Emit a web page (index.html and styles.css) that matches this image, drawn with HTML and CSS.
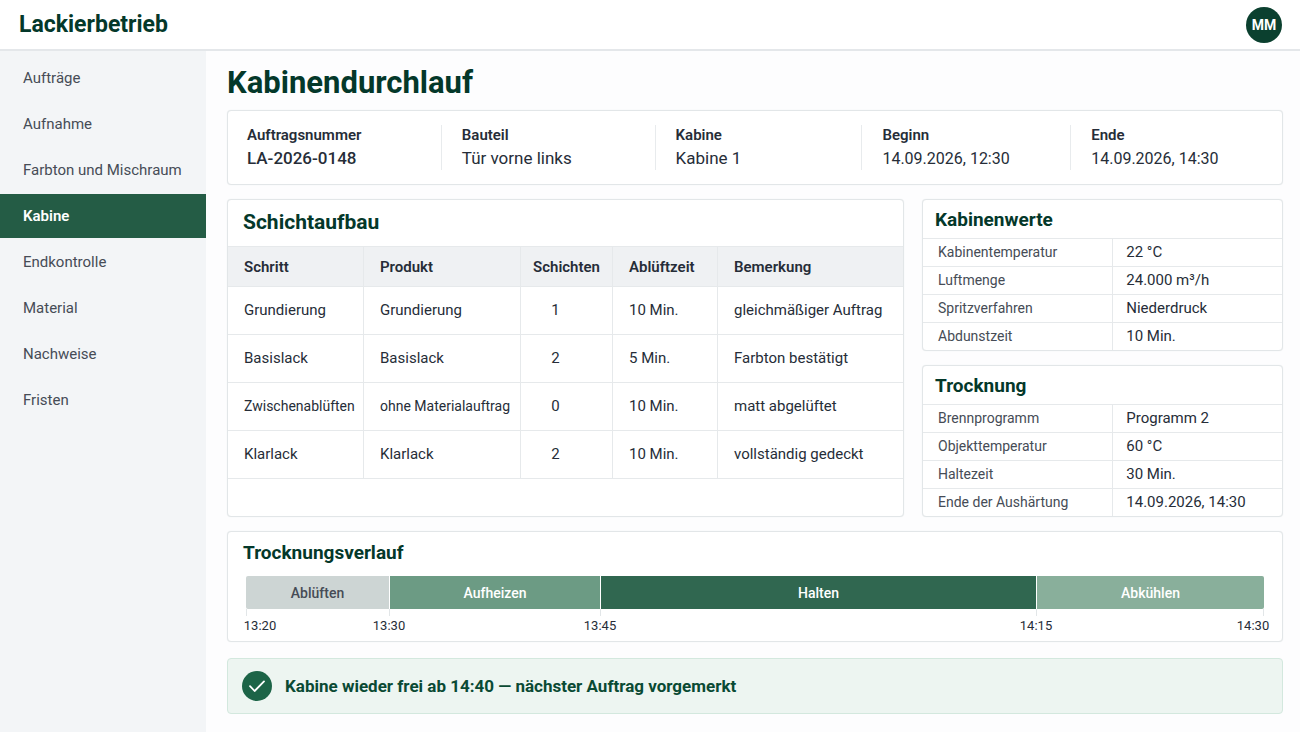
FILE: index.html
```html
<!DOCTYPE html>
<html lang="de">
<head>
  <meta charset="UTF-8" />
  <meta name="viewport" content="width=device-width, initial-scale=1.0" />
  <title>Kabinendurchlauf</title>
  <link rel="stylesheet" href="styles.css">
</head>
<body>

  <header class="topbar">
    <a href="#" class="brand">Lackierbetrieb</a>
    <button type="button" class="avatar">MM</button>
  </header>

  <div class="layout">
    <nav class="sidebar">
      <a href="#" class="nav-link">Aufträge</a>
      <a href="#" class="nav-link">Aufnahme</a>
      <a href="#" class="nav-link">Farbton und Mischraum</a>
      <a href="#" class="nav-link active">Kabine</a>
      <a href="#" class="nav-link">Endkontrolle</a>
      <a href="#" class="nav-link">Material</a>
      <a href="#" class="nav-link">Nachweise</a>
      <a href="#" class="nav-link">Fristen</a>
    </nav>

    <main class="content">
      <h1>Kabinendurchlauf</h1>

      <dl class="card summary">
        <div class="summary-item">
          <dt>Auftragsnummer</dt>
          <dd class="order-number">LA-2026-0148</dd>
        </div>
        <div class="summary-item">
          <dt>Bauteil</dt>
          <dd>Tür vorne links</dd>
        </div>
        <div class="summary-item">
          <dt>Kabine</dt>
          <dd>Kabine 1</dd>
        </div>
        <div class="summary-item">
          <dt>Beginn</dt>
          <dd class="date">14.09.2026, 12:30</dd>
        </div>
        <div class="summary-item">
          <dt>Ende</dt>
          <dd class="date">14.09.2026, 14:30</dd>
        </div>
      </dl>

      <div class="columns">
        <section class="card layers">
          <h2>Schichtaufbau</h2>
          <table class="layer-table">
            <colgroup>
              <col class="col-step" />
              <col class="col-product" />
              <col class="col-count" />
              <col class="col-time" />
              <col />
            </colgroup>
            <thead>
              <tr>
                <th>Schritt</th>
                <th>Produkt</th>
                <th class="count">Schichten</th>
                <th>Ablüftzeit</th>
                <th>Bemerkung</th>
              </tr>
            </thead>
            <tbody>
              <tr>
                <td>Grundierung</td>
                <td>Grundierung</td>
                <td class="count">1</td>
                <td>10 Min.</td>
                <td>gleichmäßiger Auftrag</td>
              </tr>
              <tr>
                <td>Basislack</td>
                <td>Basislack</td>
                <td class="count">2</td>
                <td>5 Min.</td>
                <td>Farbton bestätigt</td>
              </tr>
              <tr>
                <td class="long">Zwischenablüften</td>
                <td class="long">ohne Materialauftrag</td>
                <td class="count">0</td>
                <td>10 Min.</td>
                <td>matt abgelüftet</td>
              </tr>
              <tr>
                <td>Klarlack</td>
                <td>Klarlack</td>
                <td class="count">2</td>
                <td>10 Min.</td>
                <td>vollständig gedeckt</td>
              </tr>
            </tbody>
          </table>
        </section>

        <div class="side">
          <section class="card values">
            <h2>Kabinenwerte</h2>
            <table class="value-table">
              <tr><th scope="row">Kabinentemperatur</th><td>22 °C</td></tr>
              <tr><th scope="row">Luftmenge</th><td>24.000 m³/h</td></tr>
              <tr><th scope="row">Spritzverfahren</th><td>Niederdruck</td></tr>
              <tr><th scope="row">Abdunstzeit</th><td>10 Min.</td></tr>
            </table>
          </section>

          <section class="card values">
            <h2>Trocknung</h2>
            <table class="value-table">
              <tr><th scope="row">Brennprogramm</th><td>Programm 2</td></tr>
              <tr><th scope="row">Objekttemperatur</th><td>60 °C</td></tr>
              <tr><th scope="row">Haltezeit</th><td>30 Min.</td></tr>
              <tr><th scope="row">Ende der Aushärtung</th><td>14.09.2026, 14:30</td></tr>
            </table>
          </section>
        </div>
      </div>

      <section class="card timeline">
        <h2>Trocknungsverlauf</h2>
        <div class="phases">
          <div class="phase flash-off">Ablüften</div>
          <div class="phase heat">Aufheizen</div>
          <div class="phase hold">Halten</div>
          <div class="phase cool">Abkühlen</div>
        </div>
        <div class="scale">
          <div class="mark"><time class="first">13:20</time></div>
          <div class="mark"><time>13:30</time></div>
          <div class="mark"><time>13:45</time></div>
          <div class="mark"><time>14:15</time><time class="last">14:30</time></div>
        </div>
      </section>

      <div class="notice" role="status">
        <svg class="notice-icon" viewBox="0 0 30 30" aria-hidden="true">
          <circle cx="15" cy="15" r="15" fill="#1c6447" />
          <path d="M8 15.2l4.6 4.8 9.4-9.6" fill="none" stroke="#fff" stroke-width="1.8" stroke-linecap="round" stroke-linejoin="round" />
        </svg>
        <span>Kabine wieder frei ab 14:40 — nächster Auftrag vorgemerkt</span>
      </div>
    </main>
  </div>

</body>
</html>
```

FILE: styles.css
```css
* {
  box-sizing: border-box;
}

body {
  margin: 0;
  min-height: 100vh;
  display: flex;
  flex-direction: column;
  font-family: Roboto, "Liberation Sans", sans-serif;
  font-size: 15px;
  line-height: 20px;
  background: #fdfdfe;
  color: #262d38;
}

h1, h2, dl, dd {
  margin: 0;
}

h1, h2 {
  color: #04382a;
  font-weight: 700;
}

/* top bar */
.topbar {
  display: flex;
  align-items: center;
  justify-content: space-between;
  height: 51px;
  padding: 0 18px 0 19px;
  background: #fff;
  border-bottom: 2px solid #e4e7ea;
}

.brand {
  font-size: 23px;
  line-height: 32px;
  font-weight: 700;
  color: #04382a;
  text-decoration: none;
}

.avatar {
  width: 36px;
  height: 36px;
  padding: 0;
  border: none;
  border-radius: 50%;
  background: #0b402f;
  color: #fff;
  font-family: inherit;
  font-size: 14px;
  font-weight: 700;
  cursor: pointer;
}

.layout {
  flex: 1;
  display: flex;
}

/* sidebar */
.sidebar {
  flex: 0 0 206px;
  display: flex;
  flex-direction: column;
  gap: 2px;
  padding-top: 5px;
  background: #f3f5f7;
}

.nav-link {
  padding: 12px 0 12px 23px;
  color: #464c56;
  text-decoration: none;
}

.nav-link:hover {
  background: #e8ecee;
}

.nav-link.active {
  background: #245c45;
  color: #fff;
  font-weight: 600;
}

/* content */
.content {
  flex: 1;
  min-width: 0;
  padding: 12px 17px 18px 21px;
}

h1 {
  font-size: 31px;
  line-height: 40px;
  margin-bottom: 7px;
}

h2 {
  font-size: 19px;
  line-height: 24px;
}

.card {
  background: #fff;
  border: 1px solid #e2e6e8;
  border-radius: 4px;
  box-shadow: 0 0 1px #e2e6e8;
}

.summary {
  display: grid;
  grid-template-columns: 213fr 214fr 207fr 209fr 212fr;
  padding: 14px 0;
  margin-bottom: 14px;
}

.summary-item {
  padding-left: 20px;
  border-left: 1px solid #e8ebed;
}

.summary-item:first-child {
  padding-left: 19px;
  border-left: none;
}

.summary dt {
  font-weight: 600;
}

.summary dd {
  font-size: 17px;
  line-height: 23px;
  padding-top: 2px;
}

.summary .order-number {
  font-weight: 500;
}

.summary .date {
  font-size: 16px;
}

.columns {
  display: grid;
  grid-template-columns: 677fr 361fr;
  gap: 18px;
  margin-bottom: 14px;
}

.layers h2 {
  padding: 10px 15px 12px;
  font-size: 21px;
}

table {
  width: 100%;
  border-collapse: separate;
  border-spacing: 0;
}

th {
  text-align: left;
}

/* Schichtaufbau */
.layer-table {
  table-layout: fixed;
  border-top: 1px solid #e6e9eb;
}

.col-step {
  width: 136px;
}

.col-product {
  width: 157px;
}

.col-count {
  width: 92px;
}

.col-time {
  width: 105px;
}

.layer-table th,
.layer-table td {
  padding: 13px 0 14px 16px;
  border-bottom: 1px solid #e6e9eb;
  border-right: 1px solid #e6e9eb;
  white-space: nowrap;
}

.layer-table th:last-child,
.layer-table td:last-child {
  border-right: none;
}

.layer-table th {
  padding-top: 10px;
  padding-bottom: 9px;
  background: #eff1f3;
  font-weight: 600;
}

.layer-table .count {
  text-align: center;
  padding-left: 0;
}

.layer-table td.count {
  padding-right: 22px;
}

.layer-table .long {
  font-size: 14px;
}

/* Kabinenwerte, Trocknung */
.side {
  display: flex;
  flex-direction: column;
  gap: 14px;
}

.values h2 {
  padding: 8px 12px 6px;
}

.value-table {
  table-layout: fixed;
}

.value-table th,
.value-table td {
  height: 28px;
  padding: 0 0 2px 13px;
  border-top: 1px solid #e6e9eb;
  white-space: nowrap;
}

.value-table th {
  width: 53%;
  padding-left: 15px;
  border-right: 1px solid #e6e9eb;
  font-size: 14px;
  font-weight: 400;
  color: #464c56;
}

/* Trocknungsverlauf */
.timeline {
  padding: 9px 18px 5px;
  margin-bottom: 16px;
}

.timeline h2 {
  margin: 0 0 11px -3px;
}

.phases,
.scale {
  display: grid;
  grid-template-columns: 143fr 211fr 436fr 228fr;
}

.phases {
  border-radius: 2px;
  overflow: hidden;
}

.phase {
  padding: 7px 0 6px;
  border-left: 1px solid #fff;
  color: #fff;
  font-size: 14px;
  font-weight: 500;
  text-align: center;
}

.phase:first-child {
  border-left: none;
}

.flash-off {
  background: #cdd5d4;
  color: #464c56;
}

.heat {
  background: #6c9b84;
}

.hold {
  background: #306750;
}

.cool {
  background: #89af9b;
}

.mark {
  display: flex;
  justify-content: space-between;
}

.mark time {
  width: 36px;
  margin-left: -18px;
  padding-top: 7px;
  font-size: 13px;
  text-align: center;
  background: linear-gradient(#e2e6e8, #e2e6e8) center top / 1px 7px no-repeat;
}

.mark .first {
  margin-left: -4px;
  background-position: 4px top;
}

.mark .last {
  margin-right: -7px;
  background-position: 28px top;
}

/* notice */
.notice {
  display: flex;
  align-items: center;
  gap: 13px;
  padding: 11px 14px;
  background: #edf5f1;
  border: 1px solid #d3e8de;
  border-radius: 4px;
  color: #0a4a34;
  font-size: 17px;
  line-height: 32px;
  font-weight: 700;
}

.notice-icon {
  width: 30px;
  height: 30px;
}
```
